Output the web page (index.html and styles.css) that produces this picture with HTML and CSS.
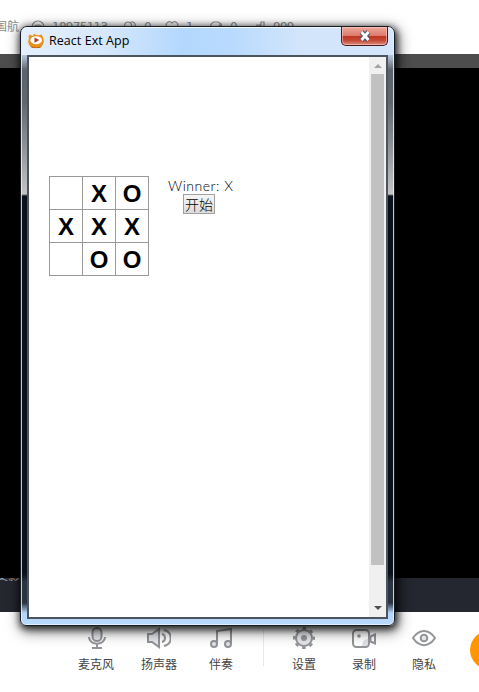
FILE: index.html
```html
<!DOCTYPE html>
<html lang="zh-CN">
<head>
<meta charset="utf-8">
<title>React Ext App</title>
<link rel="stylesheet" href="styles.css">
</head>
<body>
<div class="studio">
  <header class="stats">
    <span class="name">国航</span>
    <span class="stat s1"><svg viewBox="0 0 14 14"><circle cx="7" cy="7" r="6"/><path d="M4 9V6q3-2 6 0v3"/></svg>18975113</span>
    <span class="stat s2"><svg viewBox="0 0 14 14"><path d="M4 12C0 9 1 2 5 2s5 5 2 9M8 2c4-1 6 4 3 8"/></svg>0</span>
    <span class="stat s3"><svg viewBox="0 0 14 14"><path d="M7 12L1.500 7C0 3 4 0 7 3c3-3 7 0 5.500 4z"/></svg>1</span>
    <span class="stat s4"><svg viewBox="0 0 14 14"><path d="M9 2H5C0 4 0 12 6 12h3c4-2 4-6 3-8M9 2l3 2-3 3"/></svg>0</span>
    <span class="stat s5"><svg viewBox="0 0 14 14"><path d="M1 12V7h3v5M5 12V5h3v7M9 12V2h3v10"/></svg>999</span>
  </header>
  <div class="strip"></div>
  <main class="stage"></main>
  <div class="ticker"><span>战变影</span></div>
  <footer class="toolbar">
    <div class="tool mic"><svg viewBox="0 0 24 24"><rect class="tint" x="7.500" y="2" width="9" height="13" rx="4.500"/><path d="M4 11c0 9 16 9 16 0M12 18v4M7 22h10"/></svg><span>麦克风</span></div>
    <div class="tool speaker"><svg viewBox="0 0 24 24"><path class="tint" d="M1 8h4l7-5v18l-7-5H1z"/><path d="M15 8c4 1 4 7 0 8M17 4c9 2 9 14 0 16"/></svg><span>扬声器</span></div>
    <div class="tool music"><svg viewBox="0 0 24 24"><path d="M8 18V5l14-2v15"/><circle class="tint" cx="5" cy="18" r="3"/><circle class="tint" cx="19" cy="18" r="3"/></svg><span>伴奏</span></div>
    <i class="divider"></i>
    <div class="tool settings"><svg viewBox="0 0 24 24"><circle class="teeth" cx="12" cy="12" r="9.700"/><circle class="tint" cx="12" cy="12" r="8"/><circle class="dot" cx="12" cy="12" r="3"/></svg><span>设置</span></div>
    <div class="tool record"><svg viewBox="0 0 24 24"><path class="shade" d="M10 20c0-4 2-7 6-7v4q0 3-3 3z"/><rect x="1" y="4" width="16" height="17" rx="3.500"/><path d="M18.500 10.500l4.500-2v9l-4.500-2z"/><circle class="dot" cx="7" cy="10" r="1.800"/></svg><span>录制</span></div>
    <div class="tool privacy"><svg viewBox="0 0 24 24"><path d="M1 12C7 2.500 17 2.500 23 12C17 21.500 7 21.500 1 12z"/><circle class="tint" cx="12" cy="12" r="3.300"/></svg><span>隐私</span></div>
    <i class="live"></i>
  </footer>
</div>

<section class="window">
  <div class="titlebar">
    <svg class="logo" viewBox="0 0 16 16"><path fill="#e9921c" d="M.8 6Q0 2 2 1.500L4.500 3 6.500.5 8 2l3 .2L13.500 1.500 15 4q2 6-1 9-6 4.500-12 0Q-.8 11 .8 6z"/><path fill="#c06a10" d="M2 13q6 2.500 12 0l-2 2H4z"/><ellipse cx="8.200" cy="7.200" rx="5.800" ry="4" fill="#fff"/><path fill="#b33b26" d="M6.500 4.500v5.200l4.800-2.600z"/></svg>
    <h1>React Ext App</h1>
    <div class="close"><svg viewBox="0 0 14 12"><path class="outline" d="M3.500 2l7 8M10.500 2l-7 8"/><path class="cross" d="M3.500 2l7 8M10.500 2l-7 8"/></svg></div>
  </div>
  <div class="client">
    <div class="game">
      <div class="board">
        <span></span><span>X</span><span>O</span>
        <span>X</span><span>X</span><span>X</span>
        <span></span><span>O</span><span>O</span>
      </div>
      <div class="info">
        <div class="status">Winner: X</div>
        <button>开始</button>
      </div>
    </div>
    <div class="scrollbar">
      <svg viewBox="0 0 17 17"><path fill="#a3a3a3" d="M5 11l4-4 4 4z"/></svg>
      <div class="thumb"></div>
      <svg viewBox="0 0 17 17"><path fill="#505050" d="M5 6l4 4 4-4z"/></svg>
    </div>
  </div>
</section>
</body>
</html>
```

FILE: styles.css
```css
* { box-sizing: border-box; }
body {
  margin: 0;
  width: 479px;
  height: 692px;
  overflow: hidden;
  position: relative;
  background: #fff;
  font: 12px "Noto Sans CJK SC", sans-serif;
}
.studio { height: 692px; display: flex; flex-direction: column; }
.stats { height: 54px; display: flex; padding-top: 17px; line-height: 18px; color: #8c8c8c; }
.name { width: 31px; margin-left: -5px; white-space: nowrap; }
.stat { display: flex; gap: 7px; font: 12px/20px "DejaVu Sans", sans-serif; letter-spacing: -.7px; }
.stat svg { width: 14px; height: 14px; margin-top: 3px; fill: none; stroke: #929292; stroke-width: 1.2; }
.s1 { width: 92px; margin-left: 5px; }
.s2 { width: 42px; }
.s3 { width: 44px; }
.s4 { width: 43px; }
.strip { height: 14px; background: #4d4d4d; }
.stage { height: 510px; background: #000; }
.ticker { height: 34px; background: #24272f; color: #9b9da2; overflow: hidden; }
.ticker span { display: block; margin: -11px 0 0 -16px; line-height: 16px; }
.toolbar { height: 80px; display: flex; padding: 14px 0 0 66px; overflow: hidden; }
.tool { width: 60px; flex: none; display: flex; flex-direction: column; align-items: center; color: #444; }
.tool span { line-height: 18px; margin-top: 5px; }
.tool svg { width: 24px; height: 24px; fill: none; stroke: #929498; stroke-width: 2; }
.tool .tint { fill: #e5e6eb; }
.tool .dot { fill: #929498; stroke: none; }
.tool .shade { fill: #e0e1e6; stroke: none; }
.tool .teeth { stroke-width: 2.6; stroke-dasharray: 3.6 4.02; stroke-dashoffset: 1.8; }
.mic svg { margin-left: 1px; }
.speaker { margin-left: 3px; }
.music { margin-left: 2px; }
.divider { width: 1px; height: 36px; margin: 4px 0 0 12px; flex: none; background: #e8e8e8; }
.settings { margin-left: 10px; }
.live { width: 38px; height: 38px; flex: none; margin: 5px 0 0 16px; border-radius: 50%; background: #ff9600; }

.window {
  position: absolute;
  left: 20px;
  top: 26px;
  width: 375px;
  height: 600px;
  display: flex;
  flex-direction: column;
  padding: 0 6px 6px;
  border: 1px solid #171b22;
  border-radius: 7px 7px 6px 6px;
  background: linear-gradient(to bottom, #d9eafd 0, #c4dcf6 24px, #a3b1c4 32px, #5d636c 43px, #63676d 75px, #8a8d91 115px, #c4c4c6 167px, #0b111a 169px, #0b111a 547px, #293342 555px, #293342 576px, #b4d5fa 586px, #b9dafd 100%);
  box-shadow: inset 0 0 0 1px rgba(235, 246, 255, .8), 1px 2px 7px 1px rgba(0, 0, 0, .75), 2px 4px 14px 2px rgba(0, 0, 0, .5);
}
.titlebar {
  height: 28px;
  margin: 0 -5px;
  padding: 0 5px;
  display: flex;
  align-items: flex-start;
  flex: none;
  background: linear-gradient(90deg, #e4effc 0, #d6e8fb 22%, #b4d8fd 43%, #b8dafe 56%, #d2e5fb 75%, #d4e6fb 100%);
  border-top: 1px solid #f2f9ff;
  border-radius: 6px 6px 0 0;
}
.logo { width: 16px; height: 16px; margin: 5px 0 0 1px; }
.titlebar h1 { margin: 3px 0 0 5px; font: 12.5px/19px "Open Sans", sans-serif; letter-spacing: .05px; color: #000; }
.close {
  width: 47px;
  height: 19px;
  margin: -1px 0 0 auto;
  display: grid;
  place-items: center;
  border: 1px solid #471a1e;
  border-top: 0;
  border-radius: 0 0 5px 5px;
  background: linear-gradient(#eda99d 0, #dd7a6c 48%, #bd3420 50%, #c64b37 75%, #dc8d7f 100%);
  box-shadow: inset 0 0 0 1px rgba(255, 205, 195, .6);
}
.close svg { width: 14px; height: 12px; fill: none; }
.outline { stroke: #535666; stroke-width: 5; }
.cross { stroke: #fff; stroke-width: 2.8; }
.client {
  flex: 1;
  display: flex;
  justify-content: space-between;
  border: 2px solid #4c545d;
  background: #fff;
}
.game { display: flex; padding: 119px 0 0 20px; }
.board {
  display: grid;
  grid-template-columns: repeat(3, 33px);
  grid-template-rows: repeat(3, 33px);
  width: 100px;
  height: 100px;
  border: solid #999;
  border-width: 1px 0 0 1px;
}
.board span {
  border: solid #999;
  border-width: 0 1px 1px 0;
  text-align: center;
  font: bold 24px/34px "Liberation Sans", sans-serif;
  color: #000;
}
.info { margin-left: 19px; color: #000; }
.status { height: 18px; font: 300 14px/20px Lato, sans-serif; letter-spacing: .5px; white-space: nowrap; }
.info button {
  display: block;
  width: 32px;
  height: 20px;
  margin: 0 0 0 15px;
  padding: 0;
  border: 1px solid #a0a0a0;
  background: linear-gradient(#f6f6f6, #dcdcdc);
  font: 300 14px/17px "Noto Sans CJK SC", sans-serif;
  color: #000;
}
.scrollbar { width: 17px; display: flex; flex-direction: column; align-items: center; background: #f0f0f0; }
.scrollbar svg { width: 17px; height: 17px; flex: none; }
.thumb { width: 13px; height: 491px; margin-bottom: auto; background: #c1c1c1; }
```
